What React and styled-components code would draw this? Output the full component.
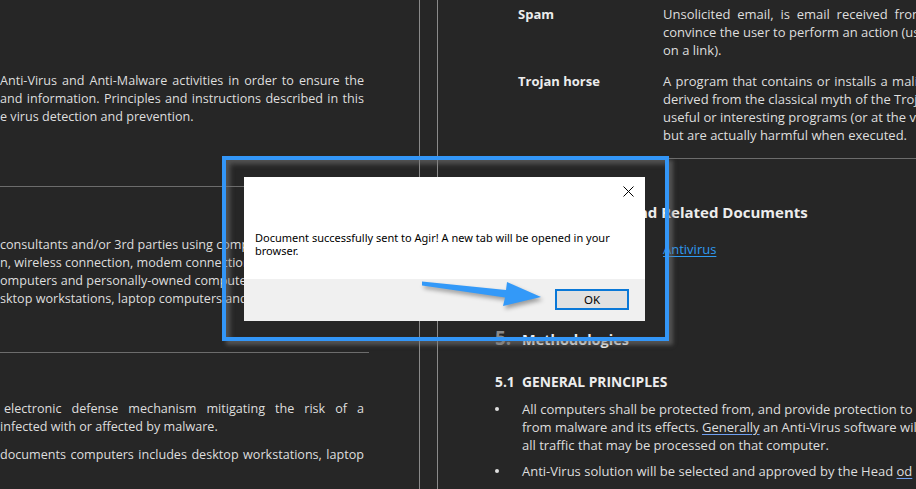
import React from 'react';
import styled, { createGlobalStyle } from 'styled-components';

const GlobalStyle = createGlobalStyle`
  html, body {
    margin: 0;
    padding: 0;
    background: #262626;
  }
  body {
    width: 916px;
    height: 489px;
    overflow: hidden;
    font-family: "Open Sans", "Noto Sans", sans-serif;
  }
`;

const Screen = styled.div`
  position: relative;
  display: flex;
  width: 916px;
  height: 489px;
  overflow: hidden;
  background: #262626;
  color: #dedede;
  font-size: 13px;
`;

const LeftPage = styled.div`
  flex: none;
  width: 420px;
  box-sizing: border-box;
  border-right: 1px solid #8a8a8a;
  padding-top: 72px;
  font-size: 12.6px;
`;

const RightPage = styled.div`
  flex: 1;
  margin-left: 17px;
  border-left: 1px solid #8a8a8a;
  padding-top: 5px;
  min-width: 0;
`;

// one printed line of the left page; $full lines are justified to the column edge
const TextLine = styled.div`
  width: ${p => 364 - (p.$indent || 0)}px;
  height: 18px;
  line-height: 18px;
  padding-left: ${p => p.$indent || 0}px;
  margin-top: ${p => p.$gap || 0}px;
  white-space: ${p => (p.$run ? 'nowrap' : 'normal')};
  text-align: ${p => (p.$full ? 'justify' : 'left')};
  text-align-last: ${p => (p.$full ? 'justify' : 'left')};
`;

const Rule = styled.div`
  height: 1px;
  width: ${p => p.$width || 'auto'};
  background: #6c6c6c;
  margin-top: ${p => p.$gap}px;
`;

const DefRow = styled.div`
  display: grid;
  grid-template-columns: 145px auto;
  padding-left: 80px;
  margin-top: ${p => p.$gap || 0}px;
  line-height: 18px;
  white-space: nowrap;
`;

const Term = styled.div`
  font-weight: 700;
  color: #ececec;
`;

const Desc = styled.div`
  word-spacing: ${p => p.$spread || 0}px;
`;

const Heading = styled.div`
  display: flex;
  align-items: baseline;
  padding-left: 57px;
  margin-top: ${p => p.$gap}px;
  height: ${p => p.$lh}px;
  line-height: ${p => p.$lh}px;
  font-weight: 700;
  font-size: ${p => p.$size}px;
  color: #ededed;
  white-space: nowrap;
`;

const HeadNum = styled.span`
  width: ${p => p.$width || 27}px;
  flex: none;
  font-size: ${p => (p.$big ? '19px' : 'inherit')};
  color: ${p => (p.$dim ? '#8a8a8a' : '#ededed')};
`;

const LinkRow = styled.div`
  padding-left: 225px;
  margin-top: ${p => p.$gap}px;
  line-height: 18px;
`;

const DocLink = styled.span`
  color: #2f9af0;
  text-decoration: underline;
  text-underline-offset: 2px;
`;

const BulletList = styled.ul`
  list-style: none;
  margin: ${p => p.$gap}px 0 0;
  padding: 0 0 0 57px;
  white-space: nowrap;
`;

const Bullet = styled.li`
  display: flex;
  line-height: 18px;
  margin-top: ${p => p.$gap || 0}px;

  &::before {
    content: '';
    flex: none;
    width: 4px;
    height: 4px;
    border-radius: 50%;
    background: #dedede;
    margin: 7px 23px 0 0;
  }
`;

const Spell = styled.span`
  text-decoration: underline;
  text-decoration-color: #6f9ff0;
  text-underline-offset: 2px;
`;

const Highlight = styled.div`
  position: absolute;
  left: 222px;
  top: 156px;
  width: 447px;
  height: 185px;
  box-sizing: border-box;
  border: 4px solid #3396f7;
  box-shadow: 4px 4px 4px rgba(120, 120, 120, 0.55),
    inset 4px 4px 5px rgba(120, 120, 120, 0.55);
  pointer-events: none;
`;

const Dialog = styled.div`
  position: absolute;
  left: 244px;
  top: 177px;
  width: 401px;
  height: 144px;
  display: flex;
  flex-direction: column;
  background: #ffffff;
  font-family: "Noto Sans", "Open Sans", sans-serif;
  font-size: 11px;
  color: #000;
`;

const DialogBody = styled.div`
  flex: 1;
  display: flex;
  flex-direction: column;
`;

const TitleBar = styled.div`
  display: flex;
  justify-content: flex-end;
  padding: 9px 11px 0 0;
`;

const Message = styled.div`
  margin-top: 34px;
  padding: 0 11px;
  line-height: 13px;
`;

const Footer = styled.div`
  height: 42px;
  display: flex;
  justify-content: flex-end;
  align-items: flex-start;
  padding: 10px 16px 0 0;
  box-sizing: border-box;
  background: #f0f0f0;
`;

const OkButton = styled.button`
  width: 74px;
  height: 21px;
  box-sizing: border-box;
  border: 2px solid #0a78d7;
  background: #e1e1e1;
  font: inherit;
  font-size: 11.5px;
  color: #000;
  padding: 0;
`;

const Arrow = styled.svg`
  position: absolute;
  left: 415px;
  top: 275px;
  filter: drop-shadow(2px 3px 2px rgba(0, 0, 0, 0.35));
  pointer-events: none;
`;

const CloseIcon = () => (
  <svg width="11" height="11" viewBox="0 0 11 11">
    <path d="M0.5 0.5L10.5 10.5M10.5 0.5L0.5 10.5" stroke="#000" strokeWidth="1" />
  </svg>
);

export default function App() {
  return (
    <>
      <GlobalStyle />
      <Screen>
        <LeftPage>
          <TextLine $full>Anti-Virus and Anti-Malware activities in order to ensure the</TextLine>
          <TextLine $full>and information. Principles and instructions described in this</TextLine>
          <TextLine>e virus detection and prevention.</TextLine>

          <Rule $width="369px" $gap={60} />

          <TextLine $run $gap={49}>consultants and/or 3rd parties using computers connected</TextLine>
          <TextLine $run>n, wireless connection, modem connection or any other</TextLine>
          <TextLine $run>omputers and personally-owned computers used for</TextLine>
          <TextLine $run>sktop workstations, laptop computers and mobile</TextLine>

          <Rule $width="369px" $gap={44} />

          <TextLine $full $indent={4} $gap={47}>electronic defense mechanism mitigating the risk of a</TextLine>
          <TextLine>infected with or affected by malware.</TextLine>
          <TextLine $full $gap={10}>documents computers includes desktop workstations, laptop</TextLine>
        </LeftPage>

        <RightPage>
          <DefRow>
            <Term>Spam</Term>
            <Desc>
              <Desc $spread={3.4}>Unsolicited email, is email received from an unknown sender</Desc>
              <div>convince the user to perform an action (usually clicking</div>
              <div>on a link).</div>
            </Desc>
          </DefRow>
          <DefRow $gap={13}>
            <Term>Trojan horse</Term>
            <Desc>
              <Desc $spread={0.9}>A program that contains or installs a malicious program</Desc>
              <div>derived from the classical myth of the Trojan horse</div>
              <div>useful or interesting programs (or at the very least harmless)</div>
              <div>but are actually harmful when executed.</div>
            </Desc>
          </DefRow>

          <Rule $gap={14} />

          <Heading $gap={42} $size={15} $lh={22}>
            <HeadNum $dim $width={47}>4.</HeadNum>
            References and Related Documents
          </Heading>
          <LinkRow $gap={17}>
            <DocLink>Antivirus</DocLink>
          </LinkRow>

          <Heading $gap={68} $size={14.5} $lh={24}>
            <HeadNum $dim $big>5.</HeadNum>
            Methodologies
          </Heading>
          <Heading $gap={22} $size={13.8} $lh={20}>
            <HeadNum>5.1</HeadNum>
            GENERAL PRINCIPLES
          </Heading>

          <BulletList $gap={8}>
            <Bullet>
              <div>
                <div>All computers shall be protected from, and provide protection to other computers</div>
                <div>from malware and its effects. <Spell>Generally</Spell> an Anti-Virus software will scan</div>
                <div>all traffic that may be processed on that computer.</div>
              </div>
            </Bullet>
            <Bullet $gap={8}>
              <div>Anti-Virus solution will be selected and approved by the Head <Spell>od</Spell> IT</div>
            </Bullet>
          </BulletList>
        </RightPage>

        <Dialog>
          <DialogBody>
            <TitleBar>
              <CloseIcon />
            </TitleBar>
            <Message>
              Document successfully sent to Agir! A new tab will be opened in your
              <br />
              browser.
            </Message>
          </DialogBody>
          <Footer>
            <OkButton>OK</OkButton>
          </Footer>
        </Dialog>

        <Highlight />

        <Arrow width="140" height="40" viewBox="415 275 140 40">
          <polygon
            points="422,281.5 506,290 507,282 541,297 503,306 505,297.5 422,285.5"
            fill="#3399f8"
          />
        </Arrow>
      </Screen>
    </>
  );
}
